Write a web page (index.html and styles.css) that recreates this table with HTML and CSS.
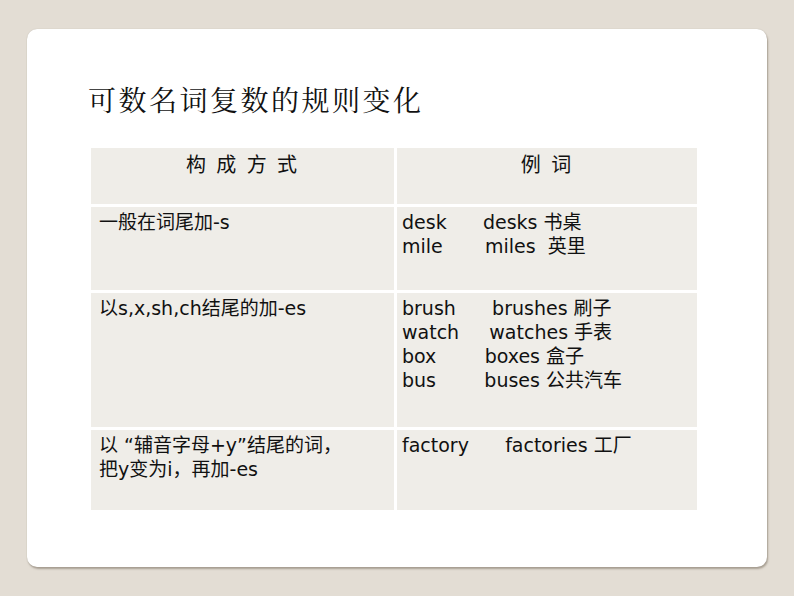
FILE: index.html
```html
<!DOCTYPE html>
<html lang="zh">
<head>
<meta charset="utf-8">
<title>可数名词复数的规则变化</title>
<link rel="stylesheet" href="styles.css">
</head>
<body>
<div class="slide">
  <h1 class="title">可数名词复数的规则变化</h1>
  <div class="table">
    <div class="cell head">构 成 方 式</div>
    <div class="cell head">例 词</div>

    <div class="cell r1">一般在词尾加-s</div>
    <div class="cell r1 ex">desk      desks 书桌
mile       miles  英里</div>

    <div class="cell r2">以s,x,sh,ch结尾的加-es</div>
    <div class="cell r2 ex">brush      brushes 刷子
watch     watches 手表
box        boxes 盒子
bus        buses 公共汽车</div>

    <div class="cell r3">以 “辅音字母+y”结尾的词，<br>把y变为i，再加-es</div>
    <div class="cell r3 ex">factory      factories 工厂</div>
  </div>
</div>
</body>
</html>
```

FILE: styles.css
```css
html, body {
  margin: 0;
  padding: 0;
}
body {
  background: #e3ddd4;
  width: 794px;
  height: 596px;
  overflow: hidden;
  padding-top: 29px;
  padding-left: 27px;
  box-sizing: border-box;
}
.slide {
  width: 740px;
  height: 538px;
  background: #ffffff;
  border-radius: 10px;
  box-shadow: 1px 2px 2px rgba(120, 110, 95, 0.55), 0 0 1px rgba(120, 110, 95, 0.4);
  box-sizing: border-box;
  padding-top: 52px;
  padding-left: 61px;
}
.title {
  margin: 0;
  font-family: "Noto Serif CJK SC", "AR PL UKai CN", "Noto Sans CJK SC", serif;
  font-weight: 400;
  font-size: 28px;
  line-height: 36px;
  letter-spacing: 2.5px;
  color: #111;
}
.table {
  margin-top: 31px;
  margin-left: 3px;
  display: grid;
  grid-template-columns: 303px 300px;
  grid-template-rows: 56px 83px 134px 80px;
  column-gap: 3px;
  row-gap: 3px;
  width: 606px;
}
.cell {
  background: #efede8;
  font-family: "DejaVu Sans", "Noto Sans CJK SC", sans-serif;
  font-size: 19px;
  line-height: 24px;
  color: #111;
  padding: 3px 8px 0 8px;
  white-space: pre;
}
.cell.ex {
  padding-left: 5px;
}
.head {
  text-align: center;
  font-size: 20px;
  letter-spacing: 2px;
  padding-top: 5px;
}
.r3 {
  white-space: normal;
}
.r3.ex {
  white-space: pre;
}
```
